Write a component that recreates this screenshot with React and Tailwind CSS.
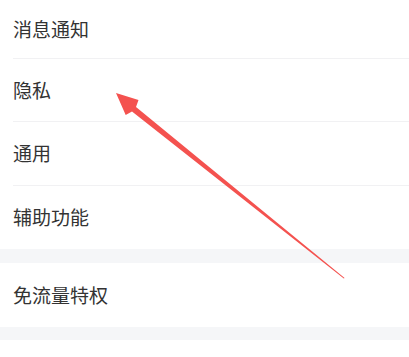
import React from "react";

const font = { fontFamily: '"Noto Sans CJK SC", "Noto Sans", sans-serif' };

function Row({ label, h = "h-[63px]", divider = true }) {
  return (
    <div className="pl-[13px] bg-white">
      <div
        className={`${h} flex items-center text-[19px] text-[#333333] ${
          divider ? "border-b border-[#f1f1f3]" : ""
        }`}
      >
        {label}
      </div>
    </div>
  );
}

function Arrow() {
  return (
    <svg
      className="absolute left-0 top-0 pointer-events-none"
      width="409"
      height="357"
      viewBox="0 0 409 357"
    >
      <polygon
        points="116,93 138.5,100 136,107 344.6,278 343.8,278.6 132,111.5 125.7,115"
        fill="#f4524f"
      />
    </svg>
  );
}

export default function App() {
  return (
    <div className="relative w-[409px] h-[357px] bg-white overflow-hidden" style={font}>
      <Row label="消息通知" h="h-[59px]" />
      <Row label="隐私" />
      <Row label="通用" h="h-[64px]" />
      <Row label="辅助功能" divider={false} />
      <div className="h-[14px] bg-[#f5f6f8]" />
      <Row label="免流量特权" h="h-[64px]" divider={false} />
      <div className="h-[13px] bg-[#f5f6f8]" />
      <div className="h-[19px] bg-white" />
      <Arrow />
    </div>
  );
}
